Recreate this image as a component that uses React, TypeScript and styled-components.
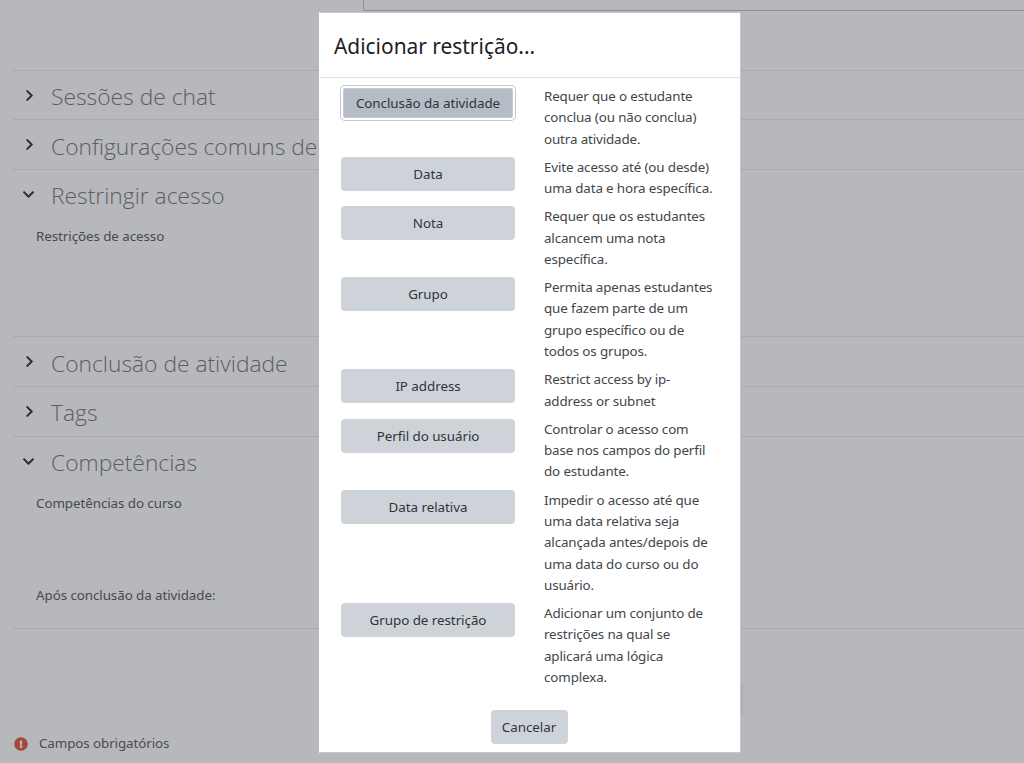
import React from 'react';
import styled, { createGlobalStyle } from 'styled-components';
import { FaChevronDown, FaChevronRight, FaExclamationCircle } from 'react-icons/fa';

const GlobalStyle = createGlobalStyle`
  html, body {
    margin: 0;
    height: 100%;
    overflow: hidden;
    background-color: #b7b8bc;
    font-family: "Noto Sans", "Open Sans", sans-serif;
  }
`;

const Page = styled.div`
  height: 763px;
  padding-left: 13px;
  display: flex;
  flex-direction: column;
  color: #4a4b4e;
`;

const TopInput = styled.div`
  height: 10px;
  margin-left: 350px;
  border-left: 1px solid #8f9094;
  border-bottom: 1px solid #8f9094;
  border-bottom-left-radius: 3px;
`;

const Sections = styled.div`
  margin-top: 58.6px;
`;

const Section = styled.section<{ $bodyHeight?: number }>`
  border-top: 1px solid #a9aaae;
  box-sizing: border-box;
  height: ${(p) => 49.7 + (p.$bodyHeight || 0)}px;
`;

const SectionHeader = styled.div`
  display: flex;
  align-items: center;
  height: 49px;
  padding-top: 3px;
  box-sizing: border-box;
  white-space: nowrap;
`;

const ChevronSlot = styled.span<{ $open?: boolean }>`
  width: 38px;
  display: flex;
  padding-left: ${(p) => (p.$open ? 9 : 10)}px;
  padding-bottom: 3px;
  box-sizing: border-box;
  color: #2f3033;
  font-size: 13px;
`;

const SectionTitle = styled.h3`
  margin: 0;
  font-family: "Open Sans", sans-serif;
  font-weight: 300;
  font-size: 22.8px;
  color: #5c5d61;
`;

const FieldLabel = styled.div<{ $gap?: number }>`
  margin: ${(p) => p.$gap ?? 0}px 0 0 23px;
  font-size: 13.4px;
  line-height: 21px;
  letter-spacing: -0.08px;
  color: #48494c;
`;

const Required = styled.div`
  margin-top: auto;
  margin-bottom: 9px;
  display: flex;
  align-items: center;
  font-size: 13.4px;
  line-height: 21px;
  letter-spacing: -0.1px;
  color: #4a4b4e;
  svg {
    color: #a5493b;
    font-size: 14px;
    margin: 0 11px 0 1px;
  }
`;

const Modal = styled.div`
  position: fixed;
  left: 319px;
  top: 12px;
  width: 422px;
  height: 741px;
  box-sizing: border-box;
  background: #fff;
  border: 1px solid #c6c7ca;
  border-left-color: #fff;
  display: flex;
  flex-direction: column;
`;

const ScrollMark = styled.div`
  position: fixed;
  left: 741px;
  top: 683px;
  width: 2px;
  height: 32px;
  background: #adaeb2;
`;

const ModalHeader = styled.header`
  height: 65px;
  box-sizing: border-box;
  padding: 2px 0 0 14px;
  border-bottom: 1px solid #dee2e6;
  display: flex;
  align-items: center;
`;

const ModalTitle = styled.h5`
  margin: 0;
  font-weight: 400;
  font-size: 20.9px;
  color: #1d2125;
`;

const ModalBody = styled.div`
  padding: 8px 0 0 21px;
  flex: 1;
`;

const Option = styled.div`
  display: grid;
  grid-template-columns: 174px 1fr;
  column-gap: 29px;
  align-items: start;
  margin-bottom: 6.85px;
`;

const Button = styled.button<{ $focused?: boolean }>`
  height: 34px;
  padding: 0;
  border: 0;
  border-radius: 4px;
  font-family: inherit;
  font-size: 13.4px;
  letter-spacing: -0.05px;
  color: #2f3439;
  background: ${(p) => (p.$focused ? '#b6bcc5' : '#ced3d9')};
  box-shadow: ${(p) => (p.$focused ? 'inset 0 0 0 2px #fff, inset 0 0 0 3px #c4cad2, 0 0 0 1px #c4cad2' : 'none')};
`;

const Description = styled.div`
  font-size: 13.4px;
  line-height: 21.33px;
  letter-spacing: -0.14px;
  color: #41464b;
  white-space: nowrap;
`;

const ModalFooter = styled.footer`
  display: flex;
  justify-content: center;
  padding: 0 2px 8px 0;
`;

const CancelButton = styled(Button)`
  width: 77px;
`;

const options = [
  { label: 'Conclusão da atividade', focused: true, text: ['Requer que o estudante', 'conclua (ou não conclua)', 'outra atividade.'] },
  { label: 'Data', text: ['Evite acesso até (ou desde)', 'uma data e hora específica.'] },
  { label: 'Nota', text: ['Requer que os estudantes', 'alcancem uma nota', 'específica.'] },
  { label: 'Grupo', text: ['Permita apenas estudantes', 'que fazem parte de um', 'grupo específico ou de', 'todos os grupos.'] },
  { label: 'IP address', text: ['Restrict access by ip-', 'address or subnet'] },
  { label: 'Perfil do usuário', text: ['Controlar o acesso com', 'base nos campos do perfil', 'do estudante.'] },
  { label: 'Data relativa', text: ['Impedir o acesso até que', 'uma data relativa seja', 'alcançada antes/depois de', 'uma data do curso ou do', 'usuário.'] },
  { label: 'Grupo de restrição', text: ['Adicionar um conjunto de', 'restrições na qual se', 'aplicará uma lógica', 'complexa.'] },
];

const Header = ({ title, open }: { title: string; open?: boolean }) => (
  <SectionHeader>
    <ChevronSlot $open={open}>{open ? <FaChevronDown /> : <FaChevronRight />}</ChevronSlot>
    <SectionTitle>{title}</SectionTitle>
  </SectionHeader>
);

const App = () => {
  return (
    <>
      <GlobalStyle />
      <Page>
        <TopInput />
        <Sections>
          <Section>
            <Header title="Sessões de chat" />
          </Section>
          <Section>
            <Header title="Configurações comuns de módulos" />
          </Section>
          <Section $bodyHeight={117.5}>
            <Header title="Restringir acesso" open />
            <FieldLabel $gap={7}>Restrições de acesso</FieldLabel>
          </Section>
          <Section>
            <Header title="Conclusão de atividade" />
          </Section>
          <Section>
            <Header title="Tags" />
          </Section>
          <Section $bodyHeight={143}>
            <Header title="Competências" open />
            <FieldLabel $gap={7}>Competências do curso</FieldLabel>
            <FieldLabel $gap={71}>Após conclusão da atividade:</FieldLabel>
          </Section>
          <Section />
        </Sections>
        <Required>
          <FaExclamationCircle />
          Campos obrigatórios
        </Required>
      </Page>
      <ScrollMark />
      <Modal>
        <ModalHeader>
          <ModalTitle>Adicionar restrição...</ModalTitle>
        </ModalHeader>
        <ModalBody>
          {options.map((o) => (
            <Option key={o.label}>
              <Button $focused={o.focused}>{o.label}</Button>
              <Description>
                {o.text.map((line) => (
                  <div key={line}>{line}</div>
                ))}
              </Description>
            </Option>
          ))}
        </ModalBody>
        <ModalFooter>
          <CancelButton>Cancelar</CancelButton>
        </ModalFooter>
      </Modal>
    </>
  );
};

export default App;
